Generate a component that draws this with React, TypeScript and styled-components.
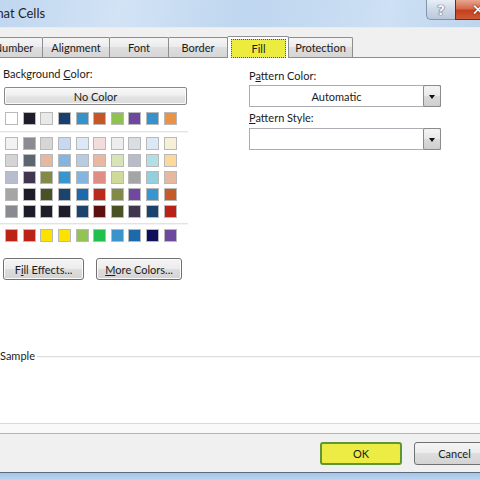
import React from 'react'
import styled, { createGlobalStyle, css } from 'styled-components'

const GlobalStyle = createGlobalStyle`
  html, body {
    margin: 0;
    padding: 0;
    background: #fff;
  }
  body {
    width: 480px;
    height: 480px;
    overflow: hidden;
    font-family: Lato, "Liberation Sans", sans-serif;
  }
`

// the dialog is wider than the shot, so it is clipped on both sides
const Viewport = styled.div`
  width: 480px;
  height: 480px;
  overflow: hidden;
`

const Window = styled.div`
  width: 536px;
  height: 480px;
  margin-left: -30px;
  display: flex;
  flex-direction: column;
  background: #f0f0f0;
  font-size: 11px;
  color: #1b1b1b;
`

/* ---------- title bar ---------- */
const TitleBar = styled.div`
  height: 28px;
  flex: none;
  box-sizing: border-box;
  display: flex;
  align-items: flex-start;
  background: linear-gradient(100deg, #bcd4ee 0%, #d2e3f5 28%, #bed6ef 52%, #cde0f4 78%, #b9d1ec 100%);
  border-bottom: 1px solid #e4edf7;
`

const Title = styled.div`
  flex: 1;
  padding-left: 4px;
  line-height: 27px;
  font-size: 13px;
  color: #1e1e1e;
`

const Caption = styled.div`
  display: flex;
  margin-right: 5px;
`

const HelpButton = styled.div`
  width: 29px;
  height: 20px;
  box-sizing: border-box;
  border: 1px solid #8494a8;
  border-top: none;
  border-right: none;
  border-radius: 0 0 0 5px;
  background: linear-gradient(#e8eef6, #cdd9e7 50%, #b9c9dc);
  display: flex;
  align-items: center;
  justify-content: center;
  font: bold 14px "DejaVu Sans", sans-serif;
  color: #f3f6fa;
  text-shadow: 0 0 1px #3d4a5c, 0 0 1px #3d4a5c;
`

const CloseButton = styled.div`
  width: 46px;
  height: 20px;
  box-sizing: border-box;
  border: 1px solid #6d2a1c;
  border-top: none;
  border-radius: 0 0 5px 0;
  background: linear-gradient(#e9a690, #d4694d 45%, #c4401f 55%, #cf5a35);
  display: flex;
  align-items: center;
  justify-content: center;
  font: bold 15px "DejaVu Sans", sans-serif;
  color: #fff;
  text-shadow: 0 0 2px #5a1a0c;
`

/* ---------- tabs ---------- */
const TabStrip = styled.div`
  height: 29px;
  flex: none;
  box-sizing: border-box;
  padding-left: 14px;
  display: flex;
  align-items: flex-end;
`

const Tab = styled.div<{ $w: number; $selected?: boolean }>`
  width: ${(p) => p.$w}px;
  height: 20px;
  box-sizing: border-box;
  margin-right: -1px;
  border: 1px solid #8c8e94;
  border-bottom: none;
  border-radius: 2px 2px 0 0;
  background: linear-gradient(#f5f5f5, #ebebeb 50%, #dedede 50%, #d6d6d6);
  display: flex;
  align-items: center;
  justify-content: center;
  font-size: 11px;
  ${(p) =>
    p.$selected &&
    css`
      position: relative;
      z-index: 1;
      height: 22px;
      margin-bottom: -1px;
      background: #fff;
      align-items: stretch;
      padding: 2px 2px 0 3px;
    `}
`

const FocusMark = styled.div`
  flex: 1;
  background: #ecec3e;
  border: 1px dotted #55551f;
  display: flex;
  align-items: center;
  justify-content: center;
`

/* ---------- panel ---------- */
const Panel = styled.div`
  height: 367px;
  flex: none;
  box-sizing: border-box;
  background: #fff;
  border-top: 1px solid #898c95;
  border-bottom: 1px solid #d9d9d9;
  padding: 9px 0 0 33px;
  display: flex;
  flex-direction: column;
`

const Columns = styled.div`
  display: grid;
  grid-template-columns: 186px 192px;
  column-gap: 60px;
`

const Column = styled.div<{ $top?: number }>`
  display: flex;
  flex-direction: column;
  padding-top: ${(p) => p.$top ?? 0}px;
`

const Label = styled.div<{ $gap?: number }>`
  line-height: 14px;
  margin-top: ${(p) => p.$gap ?? 0}px;
  white-space: nowrap;
`

const Key = styled.span`
  text-decoration: underline;
`

const NoColorButton = styled.div`
  width: 183px;
  height: 18px;
  margin: 6px 0 0 1px;
  box-sizing: border-box;
  border: 1px solid #8a8a8a;
  border-radius: 2px;
  background: linear-gradient(#f8f8f8, #efefef 45%, #e3e3e3 55%, #dcdcdc);
  box-shadow: inset 0 0 0 1px #fbfbfb;
  display: flex;
  align-items: center;
  justify-content: center;
`

const SwatchGrid = styled.div<{ $gap: number }>`
  display: grid;
  grid-template-columns: repeat(10, 13px);
  column-gap: 4.65px;
  row-gap: 4px;
  padding-left: 2px;
  margin-top: ${(p) => p.$gap}px;
`

const Swatch = styled.div<{ $c: string }>`
  width: 13px;
  height: 13px;
  box-sizing: border-box;
  border: 1px solid #b9b9b9;
  background: ${(p) => p.$c};
`

const Separator = styled.div<{ $gap: number }>`
  width: 188px;
  height: 1px;
  margin: ${(p) => p.$gap}px 0 0 -3px;
  background: #e3e3e3;
  box-shadow: 0 1px 0 #f4f4f4;
`

const ButtonRow = styled.div`
  display: flex;
  gap: 12px;
  margin-top: 16px;
`

const PushButton = styled.div<{ $w: number }>`
  width: ${(p) => p.$w}px;
  height: 22px;
  box-sizing: border-box;
  border: 1px solid #707070;
  border-radius: 3px;
  background: linear-gradient(#f4f4f4, #ececec 50%, #dedede 50%, #d3d3d3);
  box-shadow: inset 0 0 0 1px #fcfcfc;
  display: flex;
  align-items: center;
  justify-content: center;
  white-space: nowrap;
`

const Combo = styled.div<{ $gap: number }>`
  height: 22px;
  margin-top: ${(p) => p.$gap}px;
  box-sizing: border-box;
  border: 1px solid #abadb3;
  display: flex;
`

const ComboText = styled.div`
  flex: 1;
  display: flex;
  align-items: center;
  justify-content: center;
`

const DropButton = styled.div`
  width: 18px;
  margin: -1px -1px -1px 0;
  box-sizing: border-box;
  border: 1px solid #8b8b8b;
  border-radius: 2px;
  background: linear-gradient(#f4f4f4, #e9e9e9 50%, #dadada 50%, #cfcfcf);
  display: flex;
  align-items: center;
  justify-content: center;
`

const Arrow = styled.div`
  width: 0;
  height: 0;
  border-left: 3.5px solid transparent;
  border-right: 3.5px solid transparent;
  border-top: 4px solid #111;
  margin-top: 1px;
`

const SampleRow = styled.div`
  display: flex;
  align-items: center;
  margin: 69px 0 0 -3px;
`

const Rule = styled.div`
  flex: 1;
  height: 1px;
  margin-left: 2px;
  background: #dedede;
  box-shadow: 0 1px 0 #f7f7f7;
`

/* ---------- footer ---------- */
const Spacer = styled.div`
  height: 10px;
  flex: none;
  box-sizing: border-box;
  background: #f9f9f9;
  border-bottom: 1px solid #b4b4b4;
`

const Footer = styled.div`
  height: 38px;
  flex: none;
  box-sizing: border-box;
  padding: 8px 11px 0 0;
  display: flex;
  justify-content: flex-end;
  align-items: flex-start;
  gap: 12px;
  background: #f0f0f0;
`

const DialogButton = styled.div<{ $w: number; $primary?: boolean }>`
  width: ${(p) => p.$w}px;
  height: 23px;
  box-sizing: border-box;
  border: 1px solid #707070;
  border-radius: 3px;
  background: linear-gradient(#f4f4f4, #ececec 50%, #dedede 50%, #d3d3d3);
  display: flex;
  align-items: center;
  justify-content: center;
  ${(p) =>
    p.$primary &&
    css`
      border: 2px solid #5e9834;
      background: #ecec44;
    `}
`

const Frame = styled.div`
  flex: 1;
  border-top: 1px solid #5e6b7c;
  background: linear-gradient(#a3c4e8, #bcd6f1);
`

const tabs = [
  { name: 'Number', w: 59 },
  { name: 'Alignment', w: 68 },
  { name: 'Font', w: 60 },
  { name: 'Border', w: 60 },
  { name: 'Fill', w: 62, selected: true },
  { name: 'Protection', w: 65 },
]

const themeRow = ['#ffffff', '#1e1d2b', '#e9e9e9', '#183f6d', '#3692cb', '#c65628', '#8fc250', '#6d47a0', '#3692cb', '#ea9245']

const shades = [
  ['#f2f2f2', '#8a8c91', '#d6d6d6', '#c6d9ef', '#dbe9f7', '#f3dcdc', '#ededed', '#dadde1', '#dbe8f7', '#f6f0d8'],
  ['#d4d4d4', '#5d6570', '#e6b8a0', '#84b5e0', '#b8cbe0', '#e8b8a0', '#d8e4b8', '#b8bccb', '#b2dfe6', '#fdd89c'],
  ['#b8bccf', '#41364f', '#838a48', '#3796cf', '#84b5e0', '#de8e82', '#cfd99a', '#a5a5a5', '#93cfdf', '#e6b8a0'],
  ['#a5a5a5', '#1d1d2a', '#4a5125', '#1a436e', '#1b6aad', '#bc2a1c', '#838a48', '#7247a0', '#3796cf', '#c65a2b'],
  ['#898b90', '#1d1d2a', '#1d1d2a', '#1d1d2a', '#1a436e', '#5d1010', '#4a5125', '#41364f', '#1a436e', '#bb2217'],
]

const standard = ['#bd2217', '#bd2217', '#fde100', '#fde100', '#93c352', '#1fc04e', '#3a94cc', '#1a6aad', '#0f0f5c', '#6e4a9e']

function App() {
  return (
    <Viewport>
      <GlobalStyle />
      <Window>
        <TitleBar>
          <Title>Format Cells</Title>
          <Caption>
            <HelpButton>?</HelpButton>
            <CloseButton>✕</CloseButton>
          </Caption>
        </TitleBar>

        <TabStrip>
          {tabs.map((t) => (
            <Tab key={t.name} $w={t.w} $selected={t.selected}>
              {t.selected ? <FocusMark>{t.name}</FocusMark> : t.name}
            </Tab>
          ))}
        </TabStrip>

        <Panel>
          <Columns>
            <Column>
              <Label>
                Background <Key>C</Key>olor:
              </Label>
              <NoColorButton>No Color</NoColorButton>
              <SwatchGrid $gap={7}>
                {themeRow.map((c, i) => (
                  <Swatch key={i} $c={c} />
                ))}
              </SwatchGrid>
              <Separator $gap={6} />
              <SwatchGrid $gap={5}>
                {shades.flat().map((c, i) => (
                  <Swatch key={i} $c={c} />
                ))}
              </SwatchGrid>
              <Separator $gap={5} />
              <SwatchGrid $gap={5}>
                {standard.map((c, i) => (
                  <Swatch key={i} $c={c} />
                ))}
              </SwatchGrid>
              <ButtonRow>
                <PushButton $w={81}>
                  F<Key>i</Key>ll Effects...
                </PushButton>
                <PushButton $w={86}>
                  <Key>M</Key>ore Colors...
                </PushButton>
              </ButtonRow>
            </Column>

            <Column $top={2}>
              <Label>
                P<Key>a</Key>ttern Color:
              </Label>
              <Combo $gap={2}>
                <ComboText>Automatic</ComboText>
                <DropButton>
                  <Arrow />
                </DropButton>
              </Combo>
              <Label $gap={4}>
                <Key>P</Key>attern Style:
              </Label>
              <Combo $gap={3}>
                <ComboText />
                <DropButton>
                  <Arrow />
                </DropButton>
              </Combo>
            </Column>
          </Columns>

          <SampleRow>
            <Label>Sample</Label>
            <Rule />
          </SampleRow>
        </Panel>

        <Spacer />
        <Footer>
          <DialogButton $w={82} $primary>
            OK
          </DialogButton>
          <DialogButton $w={81}>Cancel</DialogButton>
        </Footer>
        <Frame />
      </Window>
    </Viewport>
  )
}

export default App
